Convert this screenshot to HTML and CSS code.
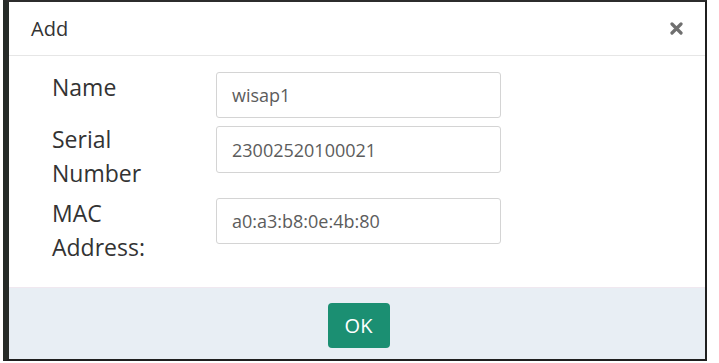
FILE: index.html
```html
<!DOCTYPE html>
<html>
<head>
<meta charset="utf-8">
<link rel="stylesheet" href="styles.css">
</head>
<body>
<div class="dialog">
  <div class="header">
    <div class="title">Add</div>
    <button class="close" aria-label="Close">
      <svg width="13" height="13" viewBox="0 0 13 13"><path d="M2 2 L11 11 M11 2 L2 11" stroke="#6f6f6f" stroke-width="3.2" stroke-linecap="round"/></svg>
    </button>
  </div>
  <div class="body">
    <div class="row">
      <label class="label">Name</label>
      <div class="input"><span class="value">wisap1</span></div>
    </div>
    <div class="row">
      <label class="label">Serial<br>Number</label>
      <div class="input second"><span class="value">23002520100021</span></div>
    </div>
    <div class="row">
      <label class="label">MAC<br>Address:</label>
      <div class="input"><span class="value">a0:a3:b8:0e:4b:80</span></div>
    </div>
  </div>
  <div class="footer">
    <button class="ok">OK</button>
  </div>
</div>
</body>
</html>
```

FILE: styles.css
```css
html, body {
  margin: 0;
  padding: 0;
  background: #ffffff;
}
body {
  font-family: "Open Sans", "Noto Sans", sans-serif;
}
.dialog {
  margin-left: 3px;
  width: 696px;
  border-top: 2px solid #2c2c2c;
  border-left: 6px solid #262b28;
  border-right: 2px solid #1f1f1f;
  border-bottom: 2px solid #1f1f1f;
  background: #ffffff;
}
.header {
  height: 53px;
  border-bottom: 1px solid #e6e6e6;
  display: flex;
  align-items: center;
  justify-content: space-between;
  padding: 0 22px 0 22px;
}
.title {
  font-size: 20px;
  color: #333333;
}
.close {
  border: none;
  background: transparent;
  padding: 0;
  width: 13px;
  height: 13px;
  display: flex;
  cursor: pointer;
}
.body {
  padding: 16px 0 21px 43px;
  display: flex;
  flex-direction: column;
  gap: 6px;
}
.row {
  display: flex;
  align-items: flex-start;
}
.label {
  width: 164px;
  font-size: 23px;
  line-height: 34px;
  margin-top: -2px;
  margin-bottom: 2px;
  color: #333333;
}
.input {
  box-sizing: border-box;
  width: 285px;
  height: 46px;
  border: 1px solid #d4d4d4;
  border-radius: 3px;
  display: flex;
  align-items: center;
}
.value {
  margin-left: 15px;
  font-size: 18px;
  color: #5c5c5c;
}
.input.second {
  margin-top: 2px;
  height: 47px;
}
.footer {
  height: 72px;
  background: #e8eef4;
  border-top: 1px solid #f0e8f0;
  box-sizing: border-box;
  display: flex;
  justify-content: center;
  padding-top: 15px;
}
.ok {
  width: 62px;
  height: 45px;
  border: none;
  border-radius: 4px;
  background: #1b8f72;
  color: #ffffff;
  font-family: "Open Sans", "Noto Sans", sans-serif;
  font-size: 20px;
  padding: 0;
  margin-left: 3px;
}
```
